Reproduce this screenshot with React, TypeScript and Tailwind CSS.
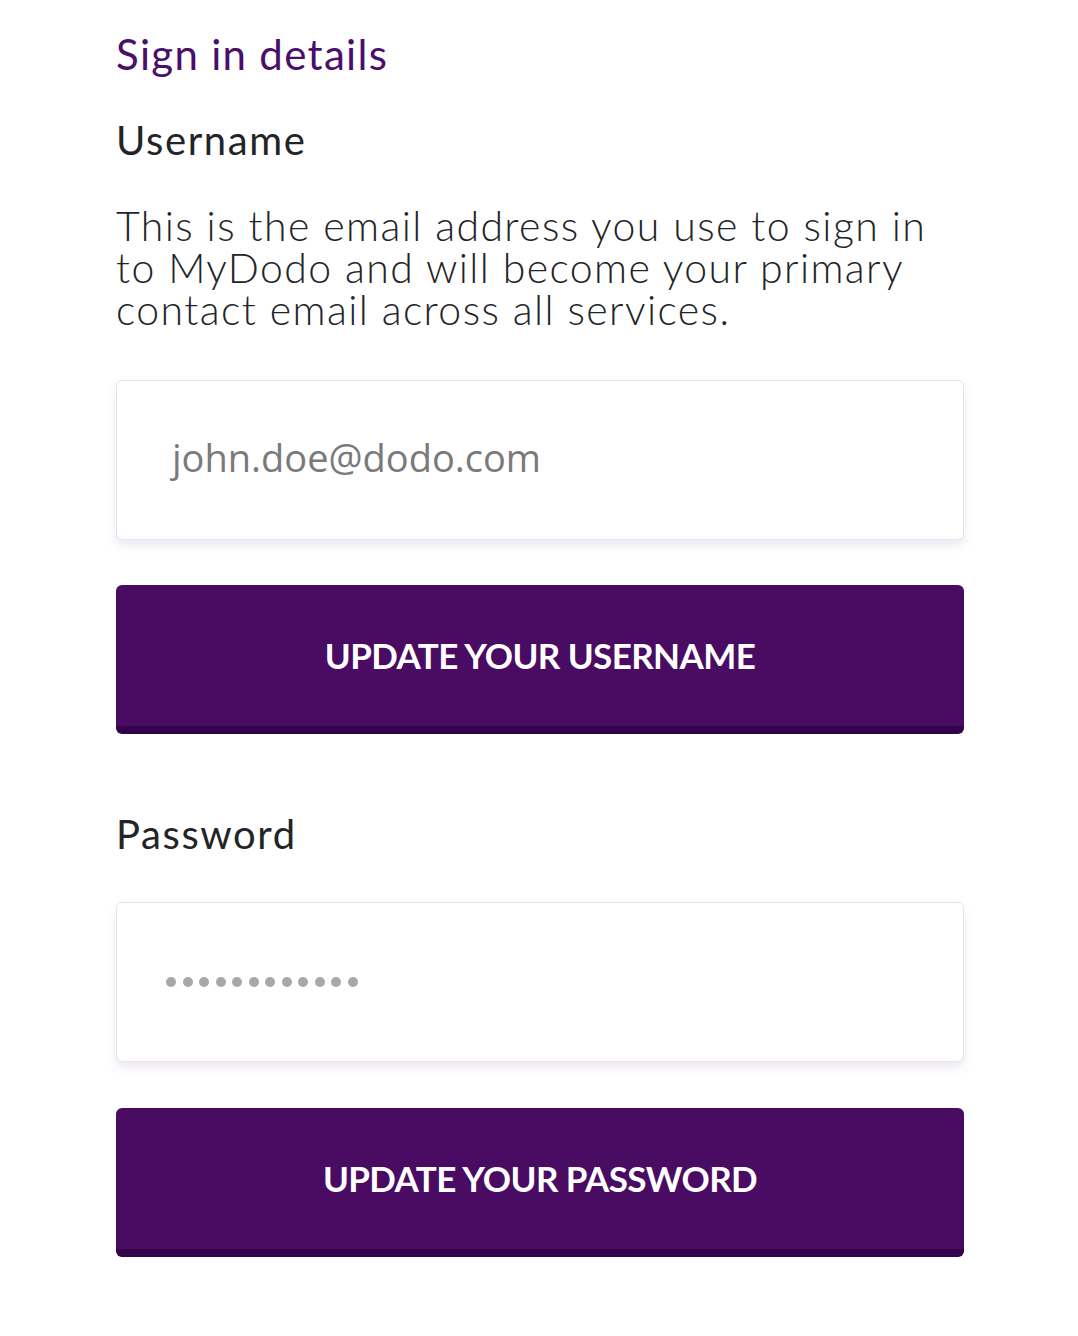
import React from "react";

export default function App() {
  return (
    <div className="w-[1078px] h-[1336px] bg-white" style={{ fontFamily: "Lato, 'Noto Sans', sans-serif" }}>
      <div className="pl-[116px] pr-[114px] pt-[28px]">
        <h1 className="text-[42px] leading-[52px] font-normal text-[#4a0e6b] tracking-[1.3px]">Sign in details</h1>
        <h2 className="mt-[34px] text-[40px] leading-[52px] font-normal text-[#222428] tracking-[1.6px]">Username</h2>
        <p className="mt-[39px] text-[41px] leading-[42px] font-light text-[#222428] tracking-[1.4px]">
          This is the email address you use to sign in to MyDodo and will become your primary contact email across all services.
        </p>
        <div className="mt-[49px] h-[160px] rounded-[6px] border border-[#e6e6e9] bg-white shadow-[0_6px_10px_rgba(120,70,160,0.12)] flex items-center pl-[55px]">
          <span className="text-[38px] text-[#7a7a7a] translate-y-[-3px]" style={{ fontFamily: "'Open Sans', sans-serif" }}>john.doe@dodo.com</span>
        </div>
        <button className="mt-[45px] w-full h-[149px] rounded-[6px] bg-[#4a0b63] border-b-[8px] border-[#33024a] text-white text-[35px] font-bold tracking-[-0.6px] flex items-center justify-center">
          UPDATE YOUR USERNAME
        </button>
        <h2 className="mt-[74px] text-[40px] leading-[52px] font-normal text-[#222428] tracking-[1.6px]">Password</h2>
        <div className="mt-[42px] h-[160px] rounded-[6px] border border-[#e6e6e9] bg-white shadow-[0_6px_10px_rgba(120,70,160,0.12)] flex items-center pl-[49px] gap-[6.5px]">
          {Array.from({ length: 12 }).map((_, i) => (
            <span key={i} className="w-[10px] h-[10px] rounded-full bg-[#a8a8a8]" />
          ))}
        </div>
        <button className="mt-[46px] w-full h-[149px] rounded-[6px] bg-[#4a0b63] border-b-[8px] border-[#33024a] text-white text-[35px] font-bold tracking-[-0.6px] flex items-center justify-center">
          UPDATE YOUR PASSWORD
        </button>
      </div>
    </div>
  );
}
